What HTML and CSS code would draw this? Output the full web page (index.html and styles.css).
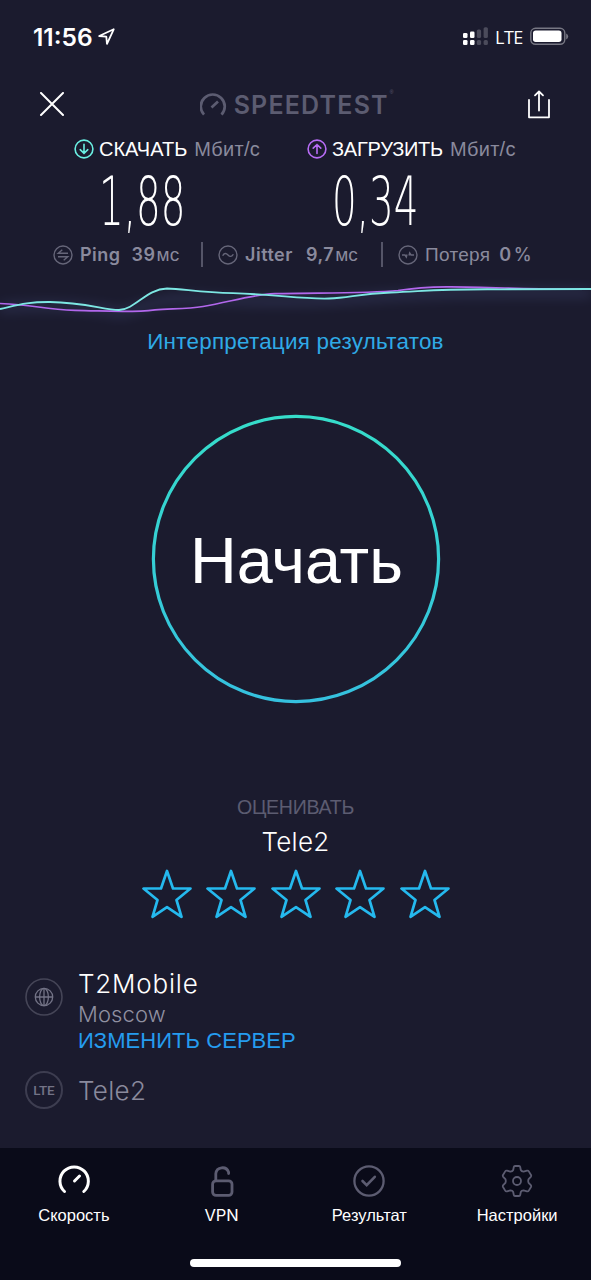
FILE: index.html
```html
<!DOCTYPE html>
<html lang="ru">
<head>
<meta charset="utf-8">
<title>Speedtest</title>
<link rel="stylesheet" href="styles.css">
</head>
<body>
<main class="screen">
  <header class="status">
    <span class="time">11:56</span>
    <svg class="location" width="18" height="18" viewBox="0 0 18 18"><path d="M1.2 8 15.7 1.3 9 15.8 8.3 8.7Z" fill="none" stroke="#fff" stroke-width="1.8" stroke-linejoin="round"/></svg>
    <svg class="signal" width="26" height="20" viewBox="0 0 26 20"><g fill="#fff"><rect x="0" y="6" width="4.5" height="5" rx="1.3"/><rect x="7" y="4.5" width="4.5" height="6.5" rx="1.3"/><rect x="0" y="13" width="4.5" height="5" rx="1.3"/><rect x="7" y="13" width="4.5" height="5" rx="1.3"/></g><g fill="#4b4b5b"><rect x="13.8" y="2.5" width="4.3" height="8.5" rx="1.5"/><rect x="20.6" y=".3" width="4.3" height="10.7" rx="1.5"/><rect x="13.8" y="13" width="4.3" height="5" rx="1.5"/><rect x="20.6" y="13" width="4.3" height="5" rx="1.5"/></g></svg>
    <span class="network">LTE</span>
    <svg class="battery" width="39" height="20" viewBox="0 0 39 20"><rect x=".8" y="1.3" width="34" height="16" rx="4.7" fill="none" stroke="#777783" stroke-width="1.4"/><rect x="3" y="3.5" width="28.5" height="11.5" rx="2.7" fill="#fff"/><path d="M36.2 6.5v6q2-1 2-3t-2-3" fill="#777783"/></svg>
  </header>

  <div class="topbar">
    <svg class="close" width="26" height="26" viewBox="0 0 26 26"><path d="m2 1 22 22M24 1 2 23" stroke="#fff" stroke-width="2" stroke-linecap="round"/></svg>
    <div class="brand">
      <svg width="28" height="26" viewBox="0 0 28 26"><path d="M4 22.7A12 12 0 1 1 21.5 22.7M11.5 15.5l6.5-6" fill="none" stroke="#5c5c71" stroke-width="2.7"/></svg>
      <span class="brand-name">SPEEDTEST</span><span class="mark">®</span>
    </div>
    <svg class="share" width="24" height="30" viewBox="0 0 24 30"><path d="M1 10V27.3h20V10M11 20.5V1.5M7 5.3 11 1.5l4 3.8" fill="none" stroke="#fff" stroke-width="1.8" stroke-linecap="round" stroke-linejoin="round"/></svg>
  </div>

  <section class="speeds">
    <div class="speed download">
      <div class="speed-label">
        <svg width="20" height="20" viewBox="0 0 20 20" fill="none" stroke="#6aefe2" stroke-width="1.6" stroke-linecap="round"><circle cx="10" cy="10" r="8.9"/><path d="M10 5.3v9M6.2 10.7l3.8 3.6 3.8-3.6"/></svg>
        <span class="name">СКАЧАТЬ</span><span class="unit">Мбит/с</span>
      </div>
      <div class="value"><span class="digits">1,88</span></div>
    </div>
    <div class="speed upload">
      <div class="speed-label">
        <svg width="20" height="20" viewBox="0 0 20 20" fill="none" stroke="#b76cf5" stroke-width="1.6" stroke-linecap="round"><circle cx="10" cy="10" r="8.9"/><path d="M10 14.5v-9M6.2 9.1 10 5.5l3.8 3.6"/></svg>
        <span class="name">ЗАГРУЗИТЬ</span><span class="unit">Мбит/с</span>
      </div>
      <div class="value"><span class="digits">0,34</span></div>
    </div>
  </section>

  <section class="stats">
    <div class="stat ping">
      <svg width="20" height="20" viewBox="0 0 20 20" fill="none" stroke="#666679" stroke-width="1.4"><circle cx="10" cy="10" r="9"/><path d="M15 8.2H5.3L9.3 4.8M5 11.8h9.7l-4 3.4"/></svg>
      <b class="stat-name">Ping</b><b class="stat-value">39</b><span class="ms">мс</span>
    </div>
    <i class="divider"></i>
    <div class="stat jitter">
      <svg width="20" height="20" viewBox="0 0 20 20" fill="none" stroke="#666679" stroke-width="1.4"><circle cx="10" cy="10" r="9"/><path d="M4.7 10.8C6 7.8 8.2 8 10 10s4 2 5.3-.8"/></svg>
      <b class="stat-name">Jitter</b><b class="stat-value">9,7</b><span class="ms">мс</span>
    </div>
    <i class="divider"></i>
    <div class="stat loss">
      <svg width="20" height="20" viewBox="0 0 20 20" fill="none" stroke="#666679" stroke-width="1.4"><circle cx="10" cy="10" r="9"/><path d="M4 10h3l1.3 2 .7-2.5M11 10.5l.7-2.5 1.3 2h3"/></svg>
      <span class="stat-name">Потеря</span><b class="stat-value">0</b><b class="percent">%</b>
    </div>
  </section>

  <svg class="waves" width="591" height="56" viewBox="0 270 591 56" fill="none">
    <defs><filter id="glow" x="-5%" y="-100%" width="110%" height="300%"><feGaussianBlur stdDeviation="6"/></filter></defs>
    <g filter="url(#glow)" opacity=".13" stroke="#8aa0ff" stroke-width="9"><path d="M0 308Q70 302 120 313C150 308 155 296 205 299S300 303 365 298S470 292 591 293"/></g>
    <path d="M0 303.5C35 304.5 42 309.5 75 310.3C105 310.8 130 313.2 155 309.8C172 308.5 187 309.3 203 306.5C230 302 251 294.8 275 293.7C310 292.5 365 293.8 398 290.5C430 285.5 460 286.5 505 288Q545 289.3 591 289" stroke="#b267ec" stroke-width="1.7"/>
    <path d="M0 309C18 305 28 301.8 50 302C84 302.2 106 310.3 119 310C136 309 146 289 167 288.5C184 289 200 292.5 233 293.2C279 294.5 300 299.3 329 298.5C350 297.7 358 293.8 391 292.5C428 291 436 288.8 500 289.3Q550 289 591 289" stroke="#7de7e3" stroke-width="1.8"/>
  </svg>
  <a class="interpret">Интерпретация результатов</a>

  <button class="start">
    <svg class="ring" width="290" height="290" viewBox="0 0 290 290"><defs><linearGradient id="ring-color" x1="0" y1="0" x2="0" y2="1"><stop stop-color="#36ddca"/><stop offset="1" stop-color="#35c1df"/></linearGradient></defs><circle cx="145" cy="145" r="142.6" fill="none" stroke="url(#ring-color)" stroke-width="3.2"/></svg>
    <span class="start-text">Начать</span>
  </button>

  <section class="rating">
    <div class="rate">ОЦЕНИВАТЬ</div>
    <div class="operator">Tele2</div>
    <div class="stars">
      <svg class="star" viewBox="0 0 50 50"><path id="star" d="M25 2 31 19.5H48.5L34.5 31 39.5 47.8 25 38.2 10.5 47.8 15.5 31 1.5 19.5H19Z"/></svg>
      <svg class="star" viewBox="0 0 50 50"><use href="#star"/></svg>
      <svg class="star" viewBox="0 0 50 50"><use href="#star"/></svg>
      <svg class="star" viewBox="0 0 50 50"><use href="#star"/></svg>
      <svg class="star" viewBox="0 0 50 50"><use href="#star"/></svg>
    </div>
  </section>

  <section class="connection">
    <div class="server">
      <svg width="38" height="38" viewBox="0 0 38 38" fill="none" stroke="#737386" stroke-width="1.3"><circle cx="19" cy="19" r="18" stroke="#454557" stroke-width="1.6"/><circle cx="19" cy="19" r="8.7"/><ellipse cx="19" cy="19" rx="4.4" ry="8.7"/><path d="M10.3 19h17.4M19 10.3v17.4"/></svg>
      <div class="server-info">
        <div class="server-name">T2Mobile</div>
        <div class="city">Moscow</div>
        <a class="change">ИЗМЕНИТЬ СЕРВЕР</a>
      </div>
    </div>
    <div class="provider">
      <div class="lte">LTE</div>
      <div class="provider-name">Tele2</div>
    </div>
  </section>

  <nav class="tabs">
    <div class="tab-row">
      <div class="tab"><svg width="34" height="34" viewBox="-17 -17 34 34" fill="none" stroke="#fff" stroke-width="3" stroke-linecap="round"><path d="M-9.5 10.5A14.2 14.2 0 1 1 9.8 10.5M.5 0l5-5"/></svg><span class="tab-name speed-tab">Скорость</span></div>
      <div class="tab"><svg width="34" height="34" viewBox="-17 -17 34 34" fill="none" stroke="#5c5c71" stroke-width="2.8" stroke-linecap="round"><rect x="-9.4" y="-.2" width="19.4" height="14.6" rx="3.4"/><path d="M-6.2-.8v-6.6a6.6 6.6 0 0 1 12.8-1.4V-7.4"/></svg><span class="tab-name vpn">VPN</span></div>
      <div class="tab"><svg width="34" height="34" viewBox="-17 -17 34 34" fill="none" stroke="#5c5c71" stroke-width="2.3" stroke-linecap="round"><circle r="14.6"/><path d="m-6.5 0 4.2 4.2L5.8-4.2" stroke-width="2.6"/></svg><span class="tab-name">Результат</span></div>
      <div class="tab"><svg width="34" height="34" viewBox="-17 -17 34 34" fill="none" stroke="#5c5c71" stroke-width="1.8" stroke-linejoin="round"><path d="M-2-15H2Q3-15 3.2-14L3.8-11Q4.5-9.5 6.5-9.4L10-10.3Q11.2-10.6 11.8-9.6L14-6Q14.5-5 13.8-4.2L11.6-1.8Q10.8 0 11.6 1.8L13.8 4.2Q14.5 5 14 6L11.8 9.6Q11.2 10.6 10 10.3L6.5 9.4Q4.5 9.5 3.8 11L3.2 14Q3 15 2 15H-2Q-3 15-3.2 14L-3.8 11Q-4.5 9.5-6.5 9.4L-10 10.3Q-11.2 10.6-11.8 9.6L-14 6Q-14.5 5-13.8 4.2L-11.6 1.8Q-10.8 0-11.6-1.8L-13.8-4.2Q-14.5-5-14-6L-11.8-9.6Q-11.2-10.6-10-10.3L-6.5-9.4Q-4.5-9.5-3.8-11L-3.2-14Q-3-15-2-15Z"/><circle r="4"/></svg><span class="tab-name">Настройки</span></div>
    </div>
    <div class="home"></div>
  </nav>
</main>
</body>
</html>
```
FILE: styles.css
```css
* { box-sizing: border-box; }
body { margin: 0; background: #1b1b2e; font-family: "Liberation Sans", sans-serif; color: #fff; }
svg { display: block; flex: none; }
.screen { width: 591px; height: 1280px; display: flex; flex-direction: column; overflow: hidden; white-space: nowrap; background: #1b1b2e; }

.status { height: 74px; padding-left: 33px; display: flex; align-items: center; }
.time { width: 65px; font: 600 24.5px/30px Inter, sans-serif; }
.location { margin-right: 347px; }
.signal { margin-right: 6px; }
.network { width: 35px; font: 500 18px/24px "Open Sans", sans-serif; letter-spacing: -.5px; }

.topbar { height: 62px; padding: 0 39px 1px; display: flex; justify-content: space-between; align-items: center; }
.brand { display: flex; align-items: center; gap: 6px; color: #5c5c71; }
.brand-name { width: 150px; padding-top: 1px; font: 600 25px/30px Inter, sans-serif; letter-spacing: 1.2px; }
.mark { font-size: 5px; align-self: flex-start; }

.speeds { height: 101px; display: flex; }
.download { width: 233px; margin-left: 74px; }
.speed-label { height: 25px; display: flex; align-items: center; font-size: 20px; line-height: 24px; }
.name { margin-left: 5px; }
.upload .name { letter-spacing: -.25px; }
.unit { margin-left: 7px; color: #8a8a9d; letter-spacing: .3px; }
.value { height: 76px; padding: 5px 0 0 25px; display: flex; align-items: center; }
.digits { font: 200 67px/70px "DejaVu Sans", "DejaVu Sans Light", sans-serif; transform: scaleX(.58); transform-origin: left; }

.stats { height: 33px; padding: 2px 0 0 53px; display: flex; align-items: center; color: #8a8a9d; }
.stat { display: flex; align-items: center; line-height: 24px; }
.ping { width: 148px; }
.jitter { width: 163px; margin-left: 15px; }
.loss { margin-left: 15px; }
.stat b { font: 600 18px/24px Inter, sans-serif; }
.stat-name { margin-left: 7px; letter-spacing: .5px; font-size: 19px; }
.loss .stat-name { letter-spacing: .3px; }
.stat-value { margin-left: 11px; letter-spacing: .5px; }
.jitter .stat-value { margin-left: 13px; }
.loss .stat-value { margin-left: 9px; }
.ms { margin-left: 1px; font-size: 19px; }
.stat .percent { margin-left: 2px; font-weight: 500; }
.divider { width: 2px; height: 25px; background: #555568; }

.interpret { height: 32px; text-align: center; font-size: 22.4px; line-height: 32px; letter-spacing: .25px; color: #2faae6; }

.start { width: 290px; height: 290px; margin: 56px 0 0 150.5px; padding: 0; border: 0; background: none; color: inherit; display: grid; place-items: center; }
.ring, .start-text { grid-area: 1 / 1; }
.start-text { padding: 3px 0 0 2px; font: 64.7px/80px "Liberation Sans", sans-serif; }

.rating { margin-top: 91px; display: flex; flex-direction: column; align-items: center; }
.rate { font-size: 19.6px; line-height: 24px; letter-spacing: -.3px; color: #5c5c71; }
.operator { margin-top: 5px; font: 350 26px/36px Inter, sans-serif; letter-spacing: .3px; }
.stars { margin-top: 9px; display: flex; gap: 14.5px; }
.star { width: 50px; height: 50px; fill: none; stroke: #25b9ee; stroke-width: 2.7; stroke-linejoin: round; }

.connection { margin-top: 49px; padding-left: 25px; }
.server { display: flex; gap: 15px; }
.server > svg { margin-top: 10px; }
.server-name { font: 350 26px/32px Inter, sans-serif; letter-spacing: .8px; }
.city { font: 350 22px/28px Inter, sans-serif; letter-spacing: .1px; color: #9090a1; }
.change { display: block; padding-top: 2px; font-size: 22px; line-height: 22px; letter-spacing: .05px; color: #259cef; }
.provider { margin-top: 19px; display: flex; align-items: center; gap: 15px; }
.lte { width: 38px; height: 38px; border: 2px solid #3d3d50; border-radius: 50%; text-align: center; font: 500 13.5px/35px Roboto, sans-serif; color: #737386; }
.provider-name { padding-top: 1px; font: 350 26px/36px Inter, sans-serif; letter-spacing: .3px; color: #8a8a9d; }

.tabs { height: 132px; margin-top: auto; padding-top: 16px; background: #0a0b19; display: flex; flex-direction: column; align-items: center; }
.tab-row { width: 591px; display: grid; grid-template-columns: repeat(4, 1fr); }
.tab { display: flex; flex-direction: column; align-items: center; gap: 7px; }
.tab-name { font-size: 16.5px; line-height: 20px; }
.vpn { font-family: Inter, sans-serif; font-weight: 400; }
.home { width: 211px; height: 8px; margin-top: 34px; border-radius: 4px; background: #fff; }
```
